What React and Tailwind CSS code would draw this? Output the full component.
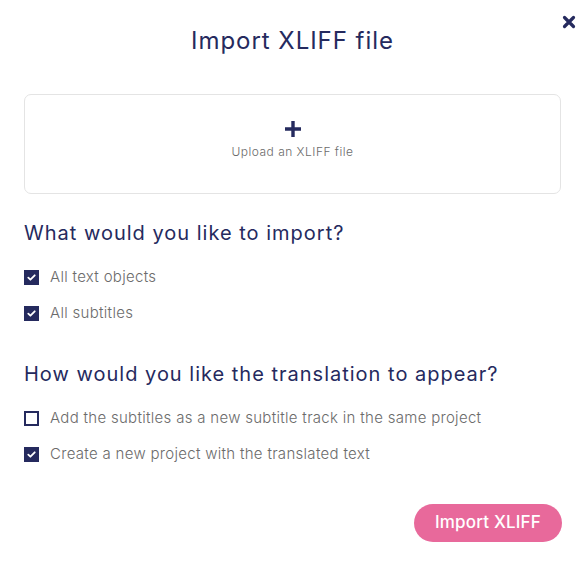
import React from 'react';

const Check = ({ checked, label }) => (
  <label className="flex items-center gap-[11px] h-[20px]">
    <span className={`w-[15px] h-[15px] flex items-center justify-center shrink-0 ${checked ? 'bg-[#252a5e]' : 'border-2 border-[#252a5e] bg-white'}`}>
      {checked && (
        <svg viewBox="0 0 12 12" className="w-[11px] h-[11px]" fill="none" stroke="white" strokeWidth="2" strokeLinecap="round" strokeLinejoin="round">
          <path d="M2.5 6.2l2.3 2.2 4.7-4.8" />
        </svg>
      )}
    </span>
    <span className="text-[15px] text-[#6b6b6b] font-light tracking-[0.02em]">{label}</span>
  </label>
);

export default function App() {
  return (
    <div className="w-[583px] h-[563px] bg-white relative" style={{ fontFamily: 'Inter, "Noto Sans", sans-serif' }}>
      <button className="absolute right-[6px] top-[14px] w-[16px] h-[16px] flex items-center justify-center" aria-label="Close">
        <svg viewBox="0 0 14 14" className="w-[14px] h-[14px]" stroke="#252a5e" strokeWidth="3.2" strokeLinecap="round">
          <path d="M2.5 2.5l9 9M11.5 2.5l-9 9" />
        </svg>
      </button>

      <div className="pl-[24px] pr-[22px] pt-[26px]">
        <h1 className="text-center text-[24px] leading-[30px] text-[#252a5e] font-normal tracking-[0.04em]">Import XLIFF file</h1>

        <div className="mt-[38px] h-[100px] border border-[#e4e4e4] rounded-[7px] flex flex-col items-center justify-center pb-[6px]">
          <svg viewBox="0 0 16 16" className="w-[16px] h-[16px]" fill="#252a5e">
            <path d="M6.3 0h3.4v6.3H16v3.4H9.7V16H6.3V9.7H0V6.3h6.3z" />
          </svg>
          <span className="mt-[6px] text-[12px] text-[#6b6b6b] font-light tracking-[0.04em]">Upload an XLIFF file</span>
        </div>

        <h2 className="mt-[26px] text-[20px] leading-[26px] text-[#252a5e] font-normal tracking-[0.05em]">What would you like to import?</h2>
        <div className="mt-[21px] flex flex-col gap-[16px]">
          <Check checked label="All text objects" />
          <Check checked label="All subtitles" />
        </div>

        <h2 className="mt-[38px] text-[20px] leading-[26px] text-[#252a5e] font-normal tracking-[0.05em]">How would you like the translation to appear?</h2>
        <div className="mt-[21px] flex flex-col gap-[16px]">
          <Check label="Add the subtitles as a new subtitle track in the same project" />
          <Check checked label="Create a new project with the translated text" />
        </div>

        <div className="mt-[40px] flex justify-end">
          <button className="mr-[-1px] w-[148px] h-[38px] rounded-full bg-[#e8699b] text-white text-[17px] font-medium tracking-[0.01em]">Import XLIFF</button>
        </div>
      </div>
    </div>
  );
}
